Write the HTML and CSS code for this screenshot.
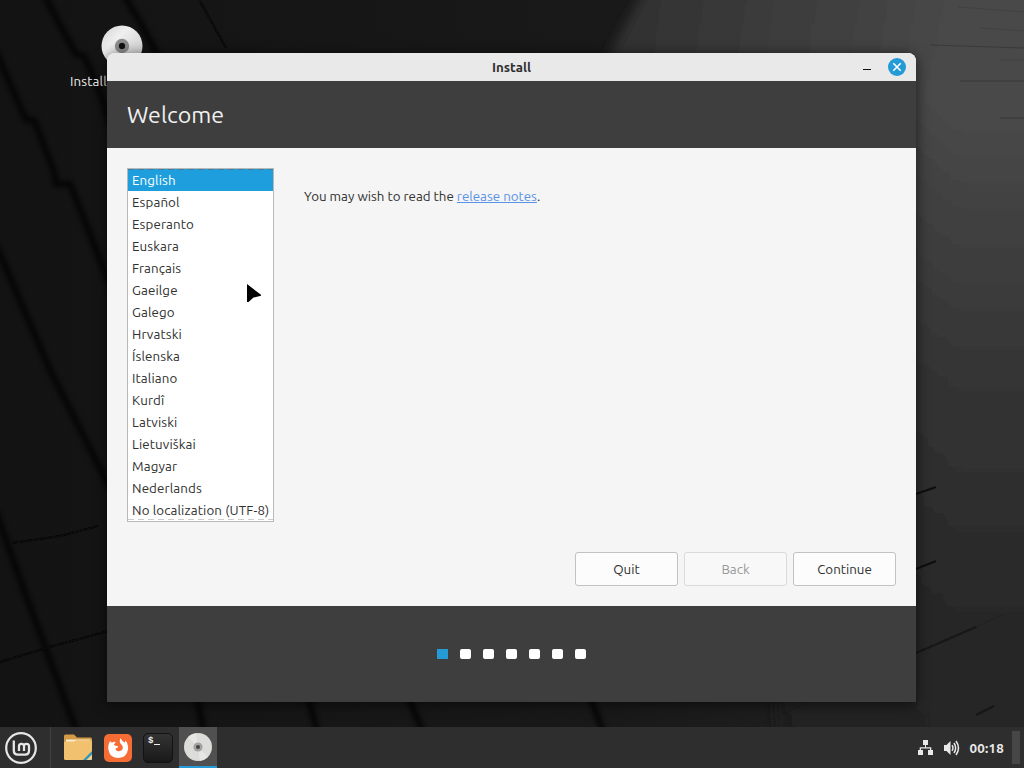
FILE: index.html
```html
<!DOCTYPE html>
<html lang="en">
<head>
    <meta charset="UTF-8">
    <meta name="viewport" content="width=device-width, initial-scale=1.0">
    <title>Install</title>
    <link rel="stylesheet" href="styles.css">
</head>
<body>

<div class="desktop">
    <svg class="wallpaper" viewBox="0 0 1024 768">
        <defs>
            <linearGradient id="base" x1="0" y1="0" x2="1" y2="0">
                <stop offset="0" stop-color="#131313"/>
                <stop offset="0.6" stop-color="#191919"/>
                <stop offset="1" stop-color="#242424"/>
            </linearGradient>
            <linearGradient id="slab" x1="0" y1="-20" x2="0" y2="780" gradientUnits="userSpaceOnUse">
                <stop offset="0" stop-color="#484848"/>
                <stop offset="0.15" stop-color="#4a4a4a"/>
                <stop offset="0.5" stop-color="#343434"/>
                <stop offset="0.8" stop-color="#282828"/>
                <stop offset="1" stop-color="#242424"/>
            </linearGradient>
            <linearGradient id="shade" x1="600" y1="0" x2="960" y2="0" gradientUnits="userSpaceOnUse">
                <stop offset="0" stop-color="#000" stop-opacity="0.35"/>
                <stop offset="1" stop-color="#000" stop-opacity="0"/>
            </linearGradient>
            <filter id="soft"><feGaussianBlur stdDeviation="6"/></filter>
            <filter id="edge" x="-10%" y="-10%" width="120%" height="120%"><feGaussianBlur stdDeviation="2.5"/></filter>
            <filter id="thin"><feGaussianBlur stdDeviation="0.6"/></filter>
        </defs>
        <rect width="1024" height="768" fill="url(#base)"/>
        <g filter="url(#soft)">
            <path d="M650 -20L590 90L760 400L780 790H1060V-20Z" fill="url(#slab)"/>
            <path d="M650 -20L590 90L760 400L780 790H1060V-20Z" fill="url(#shade)"/>
        </g>
        <g fill="none" stroke="#050505" stroke-width="6" filter="url(#edge)" opacity="0.75">
            <path d="M44 -5L60 25L76 54L84 56L100 92L112 130"/>
            <path d="M-4 52L26 120L34 120L54 172L56 184L70 184L112 290"/>
            <path d="M124 -4L140 22L160 60"/>
            <path d="M-4 245L50 370L112 492"/>
            <path d="M-5 510L24 590L48 655L78 735"/>
            <path d="M196 696L205 735M308 696L318 735M408 696L424 735M590 696L604 735"/>
        </g>
        <g fill="none" stroke="#080808" stroke-width="2" filter="url(#thin)">
            <path d="M200 1L226 48"/>
            <path d="M12 543L60 536L98 526M0 662L46 648L112 630"/>
        </g>
        <g fill="none" stroke="#111" stroke-width="2" filter="url(#thin)">
            <path d="M916 494L936 487M916 569L936 561"/>
            <path d="M916 653L976 627M976 715L994 706" opacity="0.7"/>
        </g>
        <g fill="none" stroke="#1a1a1a" stroke-width="1" opacity="0.5">
            <path d="M750 728L810 702M976 627L1004 614"/>
        </g>
        <g fill="none" stroke="#363636" stroke-width="1">
            <path d="M930 45L1024 48M960 81H1024M1000 118H1024" opacity="0.8"/>
            <path d="M958 7L1024 12M1000 60H1024M980 28L1024 31" opacity="0.4"/>
        </g>
    </svg>

    <div class="shortcut">
        <svg class="disc" viewBox="0 0 42 42">
            <defs>
                <linearGradient id="shine" x1="0" y1="0" x2="1" y2="1">
                    <stop offset="0" stop-color="#d2d2d2"/>
                    <stop offset="0.35" stop-color="#f0f0f0"/>
                    <stop offset="0.6" stop-color="#dedede"/>
                    <stop offset="1" stop-color="#c8c8c8"/>
                </linearGradient>
            </defs>
            <circle cx="21" cy="21" r="20.5" fill="url(#shine)"/>
            <circle cx="21" cy="21" r="7.2" fill="#8d8d8d"/>
            <circle cx="21" cy="21" r="3.8" fill="#111" stroke="#aaa" stroke-width="0.8"/>
        </svg>
        <span>Install Linux Mint</span>
    </div>

    <div class="window">
        <div class="titlebar">
            <span class="title">Install</span>
            <svg class="controls" viewBox="0 0 50 20">
                <path d="M6 12.5H14" stroke="#111" stroke-width="1"/>
                <circle cx="40" cy="10" r="9" fill="#249bd7"/>
                <path d="M36.3 6.3L43.7 13.7M43.7 6.3L36.3 13.7" stroke="#fff" stroke-width="1.6"/>
            </svg>
        </div>
        <div class="header">Welcome</div>
        <div class="content">
            <div class="row">
                <ul class="languages">
                    <li class="selected">English</li>
                    <li>Español</li>
                    <li>Esperanto</li>
                    <li>Euskara</li>
                    <li>Français</li>
                    <li>Gaeilge</li>
                    <li>Galego</li>
                    <li>Hrvatski</li>
                    <li>Íslenska</li>
                    <li>Italiano</li>
                    <li>Kurdî</li>
                    <li>Latviski</li>
                    <li>Lietuviškai</li>
                    <li>Magyar</li>
                    <li>Nederlands</li>
                    <li>No localization (UTF-8)</li>
                </ul>
                <p class="notes">You may wish to read the <a href="#">release notes</a>.</p>
            </div>
            <div class="buttons">
                <button>Quit</button>
                <button disabled>Back</button>
                <button>Continue</button>
            </div>
        </div>
        <div class="footer">
            <i class="dot active"></i>
            <i class="dot"></i>
            <i class="dot"></i>
            <i class="dot"></i>
            <i class="dot"></i>
            <i class="dot"></i>
            <i class="dot"></i>
        </div>
    </div>

    <svg class="pointer" viewBox="0 0 18 22">
        <path d="M2 2V20H3.5L8.5 15.5L16 13.8V12.8Z" fill="#000" stroke="#fff" stroke-width="1.6" paint-order="stroke" stroke-linejoin="round"/>
    </svg>

    <div class="panel">
        <div class="menu">
            <svg width="32" height="32" viewBox="0 0 32 32" fill="none" stroke="#e6e6e6">
                <circle cx="16" cy="16" r="14.8" stroke-width="2.2"/>
                <path d="M8.8 8.5V18.5Q8.8 22.7 13 22.7H20Q24 22.7 24 18.5V14.2Q24 11.8 21.5 11.8Q19 11.8 19 14.2V19M19 14.2Q19 11.8 16.5 11.8Q14 11.8 14 14.2V19" stroke-width="2.3"/>
            </svg>
        </div>
        <div class="launchers">
            <div class="task">
                <svg width="28" height="28" viewBox="0 0 28 28">
                    <path d="M0 2Q0 .5 1.5 .5H10L13 3.5H26.5Q28 3.5 28 5V12H0Z" fill="#d39a45"/>
                    <path d="M2 5.5H26V10H2Z" fill="#f5ead2"/>
                    <path d="M0 8.5Q0 7.5 1.5 7.5H10L12 6.3H26.5Q28 6.3 28 7.5V24.5Q28 26 26.5 26H1.5Q0 26 0 24.5Z" fill="#f1c16f"/>
                    <path d="M28 17V20.5L22.5 26H19Z" fill="#3595b5"/>
                    <path d="M28 20.5V24.5Q28 26 26.5 26H22.5Z" fill="#e7d49a"/>
                </svg>
            </div>
            <div class="task">
                <svg width="28" height="28" viewBox="0 0 28 28">
                    <rect width="28" height="28" rx="5" fill="#f66c35"/>
                    <path d="M6.2 7Q7 9 8.5 8.5Q10 7.5 11.7 8L9.8 10.8Q11.5 12 13 12Q15 12 13.8 13.5L11.5 14.5Q12 17.5 15 17.2Q19 17 18.8 13Q18.5 11 16.5 9.5Q15 8 16.5 4Q18.5 8 21 8.5L21.5 6.5Q24.5 10 24 15Q23 23.5 14.5 24Q6 24 4.5 16Q3.5 11 6.2 7Z" fill="#fff"/>
                </svg>
            </div>
            <div class="task">
                <div class="terminal">$<b></b></div>
            </div>
            <div class="task running">
                <svg width="28" height="28" viewBox="0 0 28 28">
                    <circle cx="14" cy="14" r="14" fill="#dcdcd9"/>
                    <path d="M14 14L4 4A14 14 0 0 1 12 .2ZM14 14L24 24A14 14 0 0 1 16 27.8Z" fill="#e6e6e4"/>
                    <circle cx="14" cy="14" r="4.6" fill="#a2a2a0"/>
                    <circle cx="14" cy="14" r="2" fill="#444"/>
                </svg>
            </div>
        </div>
        <div class="tray">
            <svg width="15" height="15" viewBox="0 0 15 15" fill="#e8e8e8">
                <path d="M5 0H10V5H8V7.2H13.3V10H15V15H10V10H12V8.4H3V10H5V15H0V10H1.7V7.2H7V5H5Z"/>
            </svg>
            <svg class="volume" width="16" height="16" viewBox="0 0 16 16" fill="none" stroke="#e8e8e8" stroke-width="1.5">
                <path d="M0 5H2.5L6.5 1V15L2.5 11H0Z" fill="#e8e8e8" stroke="none"/>
                <path d="M8 5.2Q10 8 8 10.8M10 3Q13.3 8 10 13M12 1Q17 8 12 15"/>
            </svg>
            <span class="clock">00:18</span>
            <i class="show-desktop"></i>
        </div>
    </div>
</div>

</body>
</html>
```
FILE: styles.css
```css
* {
    box-sizing: border-box;
}
body {
    margin: 0;
    font-family: Ubuntu, "Noto Sans", sans-serif;
    font-size: 13.33px;
    color: #303030;
}
.desktop {
    position: relative;
    width: 1024px;
    height: 768px;
    overflow: hidden;
    background-color: #151515;
}
.wallpaper {
    position: absolute;
    width: 100%;
    height: 100%;
}
.shortcut {
    position: absolute;
    left: 62px;
    top: 25px;
    width: 120px;
    display: flex;
    flex-direction: column;
    align-items: center;
    gap: 7px;
    color: #eee;
}
.shortcut span {
    white-space: nowrap;
    letter-spacing: 0.13px;
}
.disc {
    width: 42px;
    height: 42px;
}
.window {
    position: absolute;
    left: 107px;
    top: 53px;
    width: 809px;
    height: 649px;
    display: flex;
    flex-direction: column;
    border-radius: 8px 8px 0 0;
    overflow: hidden;
    background-color: #f5f5f5;
    box-shadow: 0 2px 14px rgba(0, 0, 0, 0.6);
}
.titlebar {
    display: grid;
    grid-template-columns: 1fr auto 1fr;
    align-items: center;
    height: 28px;
    background-color: #e9e9e9;
}
.title {
    grid-column: 2;
    font-weight: bold;
}
.controls {
    justify-self: end;
    width: 50px;
    height: 20px;
    margin-right: 9px;
}
.header {
    height: 67px;
    padding-left: 20px;
    line-height: 67px;
    font-size: 23.2px;
    color: #f0f0f0;
    background-color: #3e3e3e;
}
.content {
    flex: 1;
    display: flex;
    flex-direction: column;
    justify-content: space-between;
    padding: 20px;
}
.row {
    display: flex;
    gap: 30px;
}
.languages {
    width: 147px;
    height: 354px;
    margin: 0;
    padding: 0;
    list-style: none;
    border: 1px solid #b9b9b9;
    background-color: #fff;
    letter-spacing: 0.12px;
}
.languages li {
    height: 22px;
    padding-left: 4px;
    line-height: 23px;
    white-space: nowrap;
}
.languages .selected {
    color: #fff;
    background: repeating-linear-gradient(90deg, #3f7fa3 0 6px, #1e9edc 6px 10px) top / 100% 1px no-repeat #1e9edc;
}
.languages li:last-child {
    background: repeating-linear-gradient(90deg, #ccc 0 6px, #fff 6px 10px) 0 20px / 100% 1px no-repeat;
}
.notes {
    margin: 20px 0 0;
    line-height: 18px;
}
.notes a {
    color: #5a93e6;
}
.buttons {
    display: flex;
    justify-content: flex-end;
    gap: 6px;
}
button {
    width: 103px;
    height: 34px;
    border: 1px solid #c2c2c2;
    border-radius: 3px;
    background-color: #fcfcfc;
    font: inherit;
    color: #303030;
}
button:disabled {
    border-color: #dadada;
    background-color: #f8f8f8;
    color: #999;
}
.footer {
    display: flex;
    align-items: center;
    justify-content: center;
    gap: 12px;
    height: 96px;
    background-color: #3e3e3e;
}
.dot {
    width: 11px;
    height: 10px;
    border-radius: 2px;
    background-color: #fff;
}
.dot.active {
    border-radius: 0;
    background-color: #249bd7;
}
.pointer {
    position: absolute;
    left: 245px;
    top: 282px;
    width: 18px;
    height: 22px;
}
.panel {
    position: absolute;
    left: 0;
    right: 0;
    bottom: 0;
    height: 41px;
    display: flex;
    background-color: #2e2e2e;
}
.menu {
    display: flex;
    align-items: center;
    width: 51px;
    padding-left: 5px;
    border-right: 1px solid #414141;
}
.launchers {
    display: flex;
    gap: 2px;
    padding-left: 8px;
}
.task {
    display: flex;
    align-items: center;
    justify-content: center;
    width: 38px;
}
.running {
    background-color: #505050;
    border-bottom: 2px solid #249bd7;
}
.terminal {
    display: flex;
    gap: 1px;
    width: 30px;
    height: 30px;
    padding: 2px 4px;
    border: 1px solid #121212;
    border-radius: 5px;
    background: linear-gradient(#333, #191919);
    font: bold 9px "Liberation Mono", monospace;
    color: #eee;
}
.terminal b {
    width: 6px;
    height: 9px;
    border-bottom: 1px solid #eee;
}
.tray {
    display: flex;
    align-items: center;
    margin-left: auto;
    color: #e8e8e8;
}
.volume {
    margin: 0 9px 0 11px;
}
.clock {
    padding-top: 2px;
    font-weight: bold;
    letter-spacing: 0.25px;
}
.show-desktop {
    width: 8px;
    height: 33px;
    margin: 0 4px 0 8px;
    background-color: #464646;
}
```
